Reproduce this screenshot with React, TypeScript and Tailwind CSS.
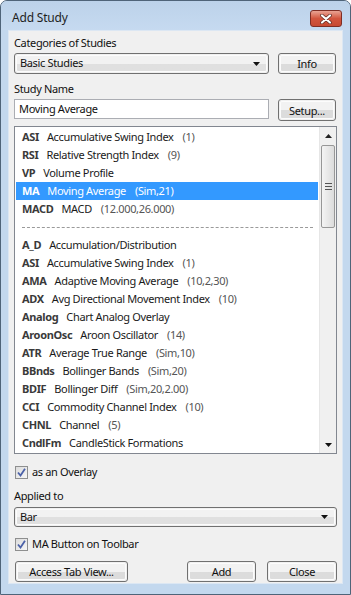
import React from 'react';

const font = { fontFamily: '"Noto Sans", "Segoe UI", Arial, sans-serif' };

const favorites = [
    ['ASI', 'Accumulative Swing Index', '(1)'],
    ['RSI', 'Relative Strength Index', '(9)'],
    ['VP', 'Volume Profile', ''],
    ['MA', 'Moving Average', '(Sim,21)'],
    ['MACD', 'MACD', '(12.000,26.000)'],
];

const studies = [
    ['A_D', 'Accumulation/Distribution', ''],
    ['ASI', 'Accumulative Swing Index', '(1)'],
    ['AMA', 'Adaptive Moving Average', '(10,2,30)'],
    ['ADX', 'Avg Directional Movement Index', '(10)'],
    ['Analog', 'Chart Analog Overlay', ''],
    ['AroonOsc', 'Aroon Oscillator', '(14)'],
    ['ATR', 'Average True Range', '(Sim,10)'],
    ['BBnds', 'Bollinger Bands', '(Sim,20)'],
    ['BDIF', 'Bollinger Diff', '(Sim,20,2.00)'],
    ['CCI', 'Commodity Channel Index', '(10)'],
    ['CHNL', 'Channel', '(5)'],
    ['CndlFm', 'CandleStick Formations', ''],
];

function Arrow({ up = false }: { up?: boolean }) {
    return (
        <svg width="7" height="4" viewBox="0 0 7 4">
            {up ? <path d="M0 4 L3.5 0 L7 4 Z" fill="#222" /> : <path d="M0 0 L7 0 L3.5 4 Z" fill="#111" />}
        </svg>
    );
}

function WinButton({ children, className = '' }: { children: React.ReactNode; className?: string }) {
    return (
        <div className={`h-[21px] rounded-[3px] border border-[#707070] p-px ${className}`}>
            <div className="h-full rounded-[2px] border border-[#fcfcfc] bg-gradient-to-b from-[#f2f2f2] from-50% to-[#dcdcdc] to-50% flex items-center justify-center text-[#111] leading-none">
                {children}
            </div>
        </div>
    );
}

function Combo({ value, className = '' }: { value: string; className?: string }) {
    return (
        <div className={`rounded-[3px] border border-[#707070] p-px ${className}`}>
            <div className="h-full rounded-[2px] border border-[#fcfcfc] bg-gradient-to-b from-[#f2f2f2] from-50% to-[#e0e0e0] to-50% flex items-center justify-between pl-[3px] pr-[6px] text-[#111]">
                <span>{value}</span>
                <Arrow />
            </div>
        </div>
    );
}

function Check({ label }: { label: string }) {
    return (
        <div className="h-[18px] flex items-center gap-[4px] text-[#111]">
            <div className="w-[13px] h-[13px] border border-[#8e8f8f] bg-gradient-to-br from-[#dcdcdc] to-[#f6f6f6] flex items-center justify-center">
                <svg width="9" height="9" viewBox="0 0 9 9">
                    <path d="M1 4.5 L3.5 7.5 L8 0.8" fill="none" stroke="#4b61a8" strokeWidth="1.8" />
                </svg>
            </div>
            <span>{label}</span>
        </div>
    );
}

function Row({ code, name, params, selected = false }: { code: string; name: string; params: string; selected?: boolean }) {
    return (
        <div className={`h-[18px] flex items-center gap-[8px] pl-[6px] whitespace-nowrap ${selected ? 'bg-[#3399ff] text-white' : ''}`}>
            <span className={`font-bold ${selected ? 'text-white' : 'text-[#3a3a3a]'}`}>{code}</span>
            <span className={selected ? 'text-white' : 'text-[#1a1a1a]'}>{name}</span>
            {params && <span className={`ml-px ${selected ? 'text-white' : 'text-[#555]'}`}>{params}</span>}
        </div>
    );
}

export default function App() {
    return (
        <div style={font} className="w-[351px] h-[595px] rounded-t-[7px] border border-[#4f6479] bg-[#c3d8ee] flex flex-col overflow-hidden text-[11px] tracking-[-0.35px]">
            {/* Title bar */}
            <div className="h-[29px] flex items-start justify-between bg-gradient-to-b from-[#bcd2ea] to-[#c6daf0]">
                <span className="pl-[11px] pt-[11px] text-[12px] tracking-[-0.2px] leading-none text-[#1e1e1e]">Add Study</span>
                <div className="mt-[9px] mr-[8px] w-[32px] h-[17px] rounded-[3px] border border-[#7f2e25] bg-gradient-to-b from-[#e8a394] via-[#d2553e] to-[#c74a33] flex items-center justify-center">
                    <svg width="12" height="10" viewBox="0 0 12 10">
                        <path d="M2 1.5 L10 8.5 M10 1.5 L2 8.5" stroke="#5a2a24" strokeWidth="3.6" strokeLinecap="round" />
                        <path d="M2 1.5 L10 8.5 M10 1.5 L2 8.5" stroke="#ffffff" strokeWidth="2.2" strokeLinecap="round" />
                    </svg>
                </div>
            </div>

            {/* Client area */}
            <div className="mx-[7px] h-[554px] bg-[#f0f0f0] border border-[#dce7f3] px-[5px] flex flex-col text-[#111]">
                <div className="mt-[3px] h-[18px] leading-[18px]">Categories of Studies</div>
                <div className="mt-px flex gap-[9px]">
                    <Combo value="Basic Studies" className="w-[255px] h-[21px]" />
                    <WinButton className="w-[58px]">Info</WinButton>
                </div>

                <div className="mt-[6px] h-[18px] leading-[18px]">Study Name</div>
                <div className="mt-px flex gap-[9px] items-start">
                    <div className="w-[255px] h-[20px] border border-[#abadb3] bg-white flex items-center pl-[4px]">Moving Average</div>
                    <WinButton className="w-[58px] h-[22px]">Setup...</WinButton>
                </div>

                {/* Study list */}
                <div className="mt-[5px] h-[328px] border border-[#828790] bg-white flex">
                    <div className="flex-1 pt-px pl-px pr-px overflow-hidden">
                        {favorites.map(([c, n, p]) => (
                            <Row key={c} code={c} name={n} params={p} selected={c === 'MA'} />
                        ))}
                        <div className="h-[18px] flex items-center pl-[6px] pr-[5px]">
                            <div className="w-full border-t border-dashed border-[#9a9a9a]" />
                        </div>
                        {studies.map(([c, n, p], i) => (
                            <Row key={c + i} code={c} name={n} params={p} />
                        ))}
                    </div>
                    <div className="w-[17px] bg-[#f0f0f0] border-l border-[#e6e6e6] flex flex-col">
                        <div className="h-[17px] flex items-center justify-center">
                            <Arrow up />
                        </div>
                        <div className="flex-1 px-px">
                            <div className="h-[83px] mt-px rounded-[2px] border border-[#979797] bg-gradient-to-r from-[#f4f4f4] to-[#dcdcdc] flex flex-col items-center justify-center gap-[2px]">
                                <div className="w-[7px] h-px bg-[#555]" />
                                <div className="w-[7px] h-px bg-[#555]" />
                                <div className="w-[7px] h-px bg-[#555]" />
                            </div>
                        </div>
                        <div className="h-[17px] flex items-center justify-center">
                            <Arrow />
                        </div>
                    </div>
                </div>

                <div className="mt-[9px] pl-px">
                    <Check label="as an Overlay" />
                </div>
                <div className="mt-[6px] h-[18px] leading-[18px]">Applied to</div>
                <Combo value="Bar" className="mt-[2px] h-[20px] w-full" />
                <div className="mt-[8px] pl-px">
                    <Check label="MA Button on Toolbar" />
                </div>

                <div className="mt-[8px] flex">
                    <WinButton className="ml-px w-[113px]">Access Tab View...</WinButton>
                    <WinButton className="ml-auto w-[69px]">Add</WinButton>
                    <WinButton className="ml-[11px] w-[70px]">Close</WinButton>
                </div>
            </div>
        </div>
    );
}
